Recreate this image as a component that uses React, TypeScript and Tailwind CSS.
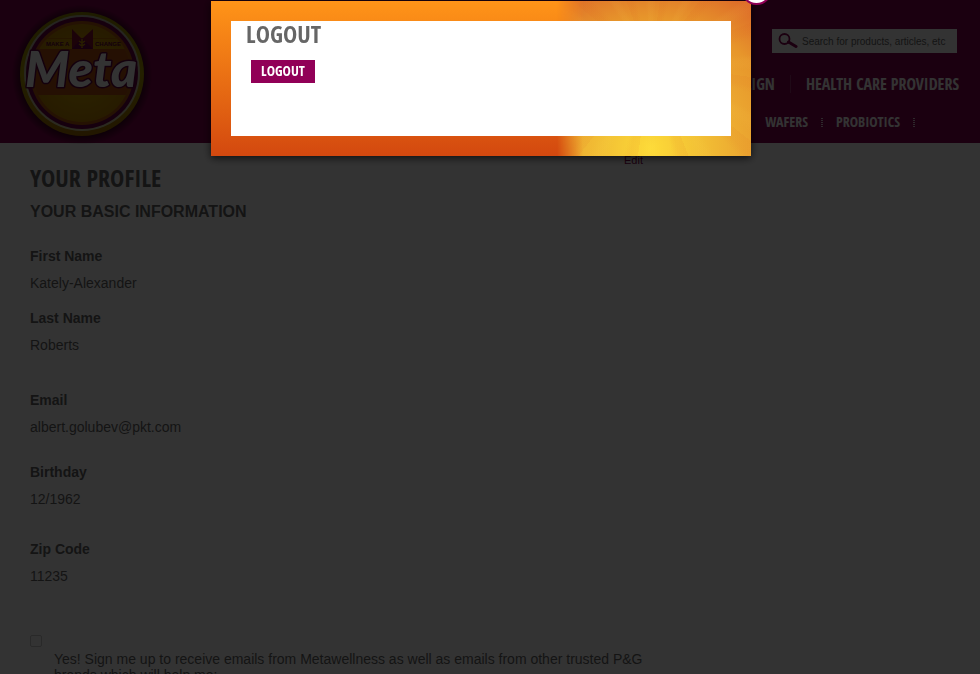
import React from "react";

const display = "font-['Open_Sans_Condensed','Roboto_Condensed','Liberation_Sans_Narrow','Open_Sans',sans-serif] font-bold";

function Logo() {
  return (
    <svg viewBox="0 0 140 140" className="h-[140px] w-[140px]" role="img" aria-label="Meta, make a change">
      <defs>
        <radialGradient id="glow">
          <stop offset="0.86" stopColor="#000" stopOpacity="0.55" />
          <stop offset="1" stopColor="#000" stopOpacity="0" />
        </radialGradient>
        <linearGradient id="rim" x1="0" y1="0" x2="0" y2="1">
          <stop offset="0" stopColor="#958a00" />
          <stop offset="0.5" stopColor="#b3a000" />
          <stop offset="1" stopColor="#a87000" />
        </linearGradient>
        <linearGradient id="shine" x1="0" y1="0" x2="0" y2="1">
          <stop offset="0" stopColor="#b8b5a0" />
          <stop offset="1" stopColor="#d8d0a0" />
        </linearGradient>
        <radialGradient id="disc">
          <stop offset="0" stopColor="#d8b400" />
          <stop offset="1" stopColor="#c08400" />
        </radialGradient>
        <clipPath id="inner">
          <circle cx="70" cy="69" r="49" />
        </clipPath>
      </defs>
      <circle cx="70" cy="71" r="70" fill="url(#glow)" />
      <circle cx="70" cy="70" r="62" fill="url(#rim)" />
      <circle cx="70" cy="69" r="58" fill="url(#shine)" />
      <circle cx="70" cy="69" r="56" fill="#700048" />
      <circle cx="70" cy="69" r="52" fill="#b85c10" />
      <g clipPath="url(#inner)">
        <rect x="18" y="19" width="104" height="102" fill="url(#disc)" />
        <rect x="18" y="34" width="104" height="1" fill="#b87000" />
        <rect x="18" y="45" width="104" height="46" fill="#b85210" />
      </g>
      <path d="M60 25L70 35L81 25V45H60Z" fill="#8a1030" />
      <path d="M60 45L70 34L81 45Z" fill="#700048" />
      <path d="M70 35v9M67 37l3 2l3-2M67 40l3 2l3-2" stroke="#c99400" strokeWidth="1.5" fill="none" />
      <g fill="#600038" fontSize="6" fontWeight="bold" fontFamily="Liberation Sans, sans-serif">
        <text x="34" y="42">MAKE A</text>
        <text x="83" y="42">CHANGE</text>
      </g>
      <text
        x="13"
        y="83"
        fill="#fff"
        stroke="#600040"
        strokeWidth="3"
        strokeLinejoin="round"
        paintOrder="stroke"
        fontFamily="Lato, sans-serif"
        fontSize="50"
        fontStyle="italic"
        fontWeight="900"
      >
        Meta
      </text>
    </svg>
  );
}

function Dots() {
  return (
    <span aria-hidden="true" className="flex flex-col gap-px">
      <i className="h-px w-[2px] bg-white/80" />
      <i className="h-px w-[2px] bg-white/80" />
      <i className="h-px w-[2px] bg-white/80" />
      <i className="h-px w-[2px] bg-white/80" />
      <i className="h-px w-[2px] bg-white/80" />
    </span>
  );
}

function Header() {
  return (
    <header className="flex h-[143px] justify-between bg-[#85004f] pl-3">
      <a href="#home" className="pt-1"><Logo /></a>
      <div className={`flex flex-col items-end text-white ${display}`}>
        <form className="mt-[29px] mr-[23px] flex h-6 w-[185px] items-center gap-1 bg-white pl-[6px]" onSubmit={(e) => e.preventDefault()}>
          <svg viewBox="0 0 20 16" className="h-4 w-5 shrink-0" fill="none" stroke="#85004f" aria-hidden="true">
            <circle cx="6.5" cy="6" r="5" strokeWidth="1.8" />
            <path d="M10.5 9L18 13.5" strokeWidth="3" strokeLinecap="round" />
          </svg>
          <input
            type="search"
            aria-label="Search"
            placeholder="Search for products, articles, etc"
            className="w-full min-w-0 bg-transparent font-['Liberation_Sans',Arial,sans-serif] text-[10px] font-normal text-[#666] outline-none placeholder:text-[#666]"
          />
        </form>
        <nav aria-label="Primary" className="mt-[19px] mr-[21px] flex h-6 items-center gap-[15px] text-base">
          <a href="#align">ALIGN</a>
          <span aria-hidden="true" className="h-[18px] w-px bg-white/20" />
          <a href="#providers">HEALTH CARE PROVIDERS</a>
        </nav>
        <nav aria-label="Products" className="mt-[14px] mr-[65px] flex h-6 items-center gap-[13px] text-sm">
          <a href="#wafers">WAFERS</a>
          <Dots />
          <a href="#probiotics">PROBIOTICS</a>
          <Dots />
        </nav>
      </div>
    </header>
  );
}

function Field({ label, value, className }: { label: string; value: string; className: string }) {
  return (
    <div className={`text-sm leading-[16px] ${className}`}>
      <dt className="font-bold">{label}</dt>
      <dd className="mt-[11px]">{value}</dd>
    </div>
  );
}

function Profile() {
  return (
    <main className="flex justify-between px-[30px] text-[#666]">
      <div className="w-full max-w-[630px] pt-[19px]">
        <h1 className={`text-2xl leading-[32px] ${display}`}>YOUR PROFILE</h1>
        <h2 className="mt-2 text-base leading-[20px] font-bold">YOUR BASIC INFORMATION</h2>
        <dl className="mt-[26px]">
          <Field label="First Name" value="Kately-Alexander" className="" />
          <Field label="Last Name" value="Roberts" className="mt-[19px]" />
          <Field label="Email" value="albert.golubev@pkt.com" className="mt-[39px]" />
          <Field label="Birthday" value="12/1962" className="mt-[29px]" />
          <Field label="Zip Code" value="11235" className="mt-[34px]" />
        </dl>
        <div className="mt-[51px] flex items-start gap-3">
          <input id="optin" type="checkbox" className="h-3 w-3 shrink-0 appearance-none rounded-[2px] border border-[#ccc] bg-white" />
          <label htmlFor="optin" className="mt-4 text-sm leading-[16px]">
            Yes! Sign me up to receive emails from Metawellness as well as emails from other trusted P&amp;G brands which will help me:
          </label>
        </div>
      </div>
      <a href="#edit" className="mr-[307px] -ml-[36px] shrink-0 pt-[11px] text-[11px] leading-[13px] text-[#85004f]">Edit</a>
    </main>
  );
}

function LogoutDialog() {
  return (
    <div className="fixed inset-0 flex items-start justify-center bg-black/80 pt-px pr-[18px]">
      <section
        role="dialog"
        aria-modal="true"
        aria-labelledby="logout-title"
        className="relative w-[540px] bg-linear-to-b from-[#ff9418] to-[#d3480f] p-5 shadow-[0_2px_8px_rgba(0,0,0,0.7)]"
      >
        <div aria-hidden="true" className="absolute inset-y-0 right-0 w-[200px] bg-[repeating-conic-gradient(from_8deg_at_50%_40%,rgba(220,90,30,0.07)_0deg_5deg,transparent_9deg_17deg,rgba(255,220,90,0.05)_20deg_23deg,transparent_27deg_30deg),radial-gradient(circle_at_50%_95%,#fddb38_0px,#f3c235_45px,#eba630_95px,#e7962b_130px,#dc6628_178px)] mask-[linear-gradient(to_right,transparent_6px,black_32px)]" />
        <div className="relative h-[115px] bg-white pl-[15px]">
          <h2 id="logout-title" className={`text-2xl leading-[26px] text-[#666] ${display}`}>LOGOUT</h2>
          <button type="button" className={`mt-[13px] ml-[5px] flex h-[23px] items-center bg-[#910057] px-[10px] pb-px text-sm text-white ${display}`}>LOGOUT</button>
        </div>
        <button type="button" aria-label="Close" className="absolute -top-[27px] -right-[21px] h-[31px] w-[31px] rounded-full border-2 border-[#910057] bg-white" />
      </section>
    </div>
  );
}

export default function App() {
  return (
    <div className="h-screen overflow-hidden bg-white font-['Liberation_Sans',Arial,sans-serif]">
      <Header />
      <Profile />
      <LogoutDialog />
    </div>
  );
}
